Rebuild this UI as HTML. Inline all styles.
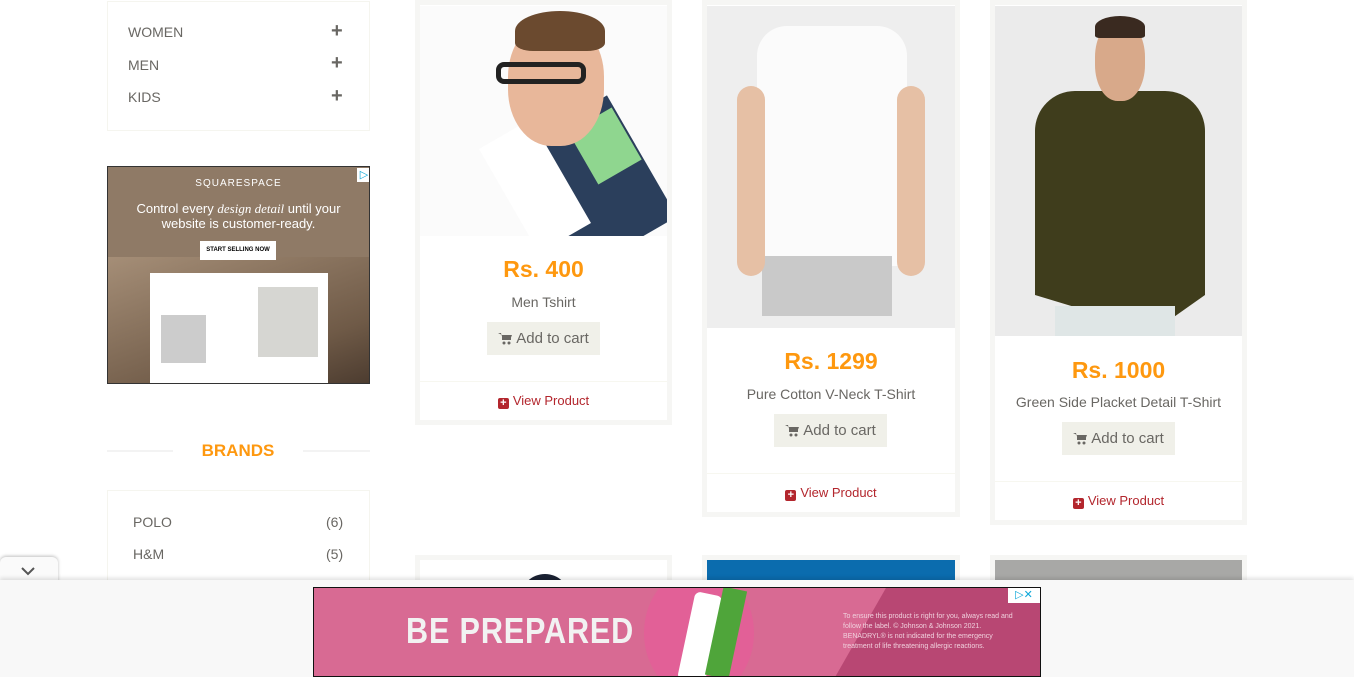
<!DOCTYPE html>
<html><head><style>
*{margin:0;padding:0;box-sizing:border-box}
body{width:1354px;height:677px;overflow:hidden;background:#fff;font-family:"Liberation Sans",Arial,sans-serif;position:relative}
.abs{position:absolute}
.cat{left:107px;top:1px;width:263px;height:130px;border:1px solid #f5f5ef}
.cat div{position:absolute;left:20px;font-size:14px;color:#696763}
.cat span{position:absolute;left:223px;font-weight:900;font-size:20px;line-height:20px;color:#696763}
.card{position:absolute;background:#f6f6f4;padding:5px}
.inner{background:#fff;width:100%;height:100%;position:relative;text-align:center}
.price{color:#fe980f;font-weight:bold;font-size:23px;position:absolute;width:100%}
.name{color:#696763;font-size:14px;position:absolute;width:100%}
.btn{position:absolute;background:#f0f0e9;color:#696763;font-size:15px;width:113px;height:33px;line-height:33px}
.btn svg{vertical-align:-2px;margin-right:4px}
.div{position:absolute;left:0;width:100%;height:1px;background:#f7f7f0}
.vp{position:absolute;width:100%;color:#b3262d;font-size:13px}
.vp b{display:inline-block;width:11px;height:11px;background:#b3262d;border-radius:2px;color:#fff;font-size:11px;line-height:11px;vertical-align:-1px;margin-right:4px}
</style></head><body>
<div class="abs cat">
<div style="top:22px">WOMEN</div><span style="top:19px">+</span>
<div style="top:55px">MEN</div><span style="top:51px">+</span>
<div style="top:87px">KIDS</div><span style="top:84px">+</span>
</div>
<div class="abs" style="left:107px;top:166px;width:263px;height:218px;background:#8f7a66;border:1px solid #333;overflow:hidden">
<div class="abs" style="left:0;top:90px;width:263px;height:130px;background:linear-gradient(160deg,#a58e77,#6f5a47 70%,#4a3a2e)"></div>
<div class="abs" style="top:11px;width:100%;text-align:center;color:#fff;font-size:10px;letter-spacing:1px">SQUARESPACE</div>
<div class="abs" style="top:34px;width:100%;text-align:center;color:#fff;font-size:13px;line-height:15px">Control every <i style="font-family:'Liberation Serif'">design detail</i> until your<br>website is customer-ready.</div>
<div class="abs" style="left:92px;top:74px;width:76px;height:19px;background:#fff;font-size:6px;text-align:center;line-height:19px;font-weight:bold">START SELLING NOW</div>
<div class="abs" style="left:42px;top:106px;width:178px;height:112px;background:#fff"></div>
<div class="abs" style="left:150px;top:120px;width:60px;height:70px;background:#d6d6d2"></div>
<div class="abs" style="left:53px;top:148px;width:45px;height:48px;background:#ccc"></div>
<div class="abs" style="left:249px;top:1px;width:14px;height:14px;background:#fff;color:#0aa6d8;font-size:11px;text-align:center">▷</div>
</div>
<div class="abs" style="left:107px;top:450px;width:66px;height:2px;background:#f3f3f3"></div>
<div class="abs" style="left:303px;top:450px;width:67px;height:2px;background:#f3f3f3"></div>
<div class="abs" style="left:173px;top:441px;width:130px;text-align:center;color:#fe980f;font-weight:bold;font-size:17px">BRANDS</div>
<div class="abs" style="left:107px;top:490px;width:263px;height:100px;border:1px solid #f5f5ef;color:#696763;font-size:14px">
<div class="abs" style="left:25px;top:23px">POLO</div><div class="abs" style="left:218px;top:23px">(6)</div>
<div class="abs" style="left:25px;top:55px">H&amp;M</div><div class="abs" style="left:218px;top:55px">(5)</div>
<div class="abs" style="left:25px;top:87px">MADAME</div><div class="abs" style="left:218px;top:87px">(5)</div>
</div>

<div class="card" style="left:415px;top:0;width:257px;height:425px"><div class="inner">
<div class="abs" style="left:0;top:1px;width:247px;height:230px;background:#fbfbfb;overflow:hidden">
<div class="abs" style="left:110px;top:110px;width:120px;height:140px;background:#2b3f5c;transform:rotate(-30deg)"></div>
<div class="abs" style="left:160px;top:110px;width:50px;height:60px;background:#8fd68f;transform:rotate(-30deg)"></div>
<div class="abs" style="left:85px;top:120px;width:60px;height:120px;background:#fff;transform:rotate(-30deg)"></div>
<div class="abs" style="left:88px;top:14px;width:96px;height:126px;background:#e8b79a;border-radius:45%"></div>
<div class="abs" style="left:95px;top:5px;width:90px;height:40px;background:#6b4a2f;border-radius:50% 50% 20% 20%"></div>
<div class="abs" style="left:76px;top:56px;width:90px;height:22px;border:5px solid #222;border-radius:8px"></div>
</div>
<div class="price" style="top:251px">Rs. 400</div>
<div class="name" style="top:289px">Men Tshirt</div>
<div class="btn" style="left:67px;top:317px"><svg width="14" height="13" viewBox="0 0 14 13"><path d="M0 1h3l2 7h7l2-5H4" fill="#696763"/><rect x="4" y="3" width="9" height="5" fill="#696763"/><circle cx="6" cy="11" r="1.5" fill="#696763"/><circle cx="11" cy="11" r="1.5" fill="#696763"/></svg>Add to cart</div>
<div class="div" style="top:376px"></div>
<div class="vp" style="top:388px"><b>+</b>View Product</div>
</div></div>

<div class="card" style="left:702px;top:0;width:258px;height:517px"><div class="inner">
<div class="abs" style="left:0;top:1px;width:248px;height:322px;background:#eeeeee;overflow:hidden">
<div class="abs" style="left:50px;top:20px;width:150px;height:240px;background:#fbfbfb;border-radius:30px 30px 10px 10px"></div>
<div class="abs" style="left:55px;top:250px;width:130px;height:60px;background:#c9c9c9"></div>
<div class="abs" style="left:30px;top:80px;width:28px;height:190px;background:#e6c0a5;border-radius:14px"></div>
<div class="abs" style="left:190px;top:80px;width:28px;height:190px;background:#e6c0a5;border-radius:14px"></div>
</div>
<div class="price" style="top:343px">Rs. 1299</div>
<div class="name" style="top:381px">Pure Cotton V-Neck T-Shirt</div>
<div class="btn" style="left:67px;top:409px"><svg width="14" height="13" viewBox="0 0 14 13"><path d="M0 1h3l2 7h7l2-5H4" fill="#696763"/><rect x="4" y="3" width="9" height="5" fill="#696763"/><circle cx="6" cy="11" r="1.5" fill="#696763"/><circle cx="11" cy="11" r="1.5" fill="#696763"/></svg>Add to cart</div>
<div class="div" style="top:468px"></div>
<div class="vp" style="top:480px"><b>+</b>View Product</div>
</div></div>

<div class="card" style="left:990px;top:0;width:257px;height:525px"><div class="inner">
<div class="abs" style="left:0;top:1px;width:247px;height:330px;background:#ebebeb;overflow:hidden">
<div class="abs" style="left:40px;top:85px;width:170px;height:240px;background:#3f3d1c;border-radius:40px 40px 0 0;clip-path:polygon(0 0,100% 0,100% 85%,70% 100%,0 85%)"></div>
<div class="abs" style="left:100px;top:15px;width:50px;height:80px;background:#d8a98a;border-radius:45%"></div>
<div class="abs" style="left:100px;top:10px;width:50px;height:22px;background:#3a2a20;border-radius:50% 50% 10% 10%"></div>
<div class="abs" style="left:60px;top:300px;width:120px;height:30px;background:#dfe6e6"></div>
</div>
<div class="price" style="top:352px">Rs. 1000</div>
<div class="name" style="top:389px">Green Side Placket Detail T-Shirt</div>
<div class="btn" style="left:67px;top:417px"><svg width="14" height="13" viewBox="0 0 14 13"><path d="M0 1h3l2 7h7l2-5H4" fill="#696763"/><rect x="4" y="3" width="9" height="5" fill="#696763"/><circle cx="6" cy="11" r="1.5" fill="#696763"/><circle cx="11" cy="11" r="1.5" fill="#696763"/></svg>Add to cart</div>
<div class="div" style="top:476px"></div>
<div class="vp" style="top:488px"><b>+</b>View Product</div>
</div></div>

<div class="card" style="left:415px;top:555px;width:257px;height:40px"><div class="inner"><div class="abs" style="left:100px;top:14px;width:50px;height:30px;background:#1b2233;border-radius:25px 25px 0 0"></div></div></div>
<div class="card" style="left:702px;top:555px;width:258px;height:40px"><div class="inner" style="background:#0b6cae"></div></div>
<div class="card" style="left:990px;top:555px;width:257px;height:40px"><div class="inner" style="background:#a8a8a6"></div></div>

<div class="abs" style="left:0;top:557px;width:58px;height:26px;background:#fafafa;border-radius:6px 6px 0 0;box-shadow:0 -1px 3px rgba(0,0,0,.25)"><svg class="abs" style="left:20px;top:9px" width="16" height="10" viewBox="0 0 16 10"><path d="M2 2l6 6 6-6" stroke="#555" stroke-width="2" fill="none"/></svg></div>
<div class="abs" style="left:0;top:580px;width:1354px;height:97px;background:#f8f8f8;box-shadow:0 -2px 4px rgba(0,0,0,.12)"></div>
<div class="abs" style="left:313px;top:587px;width:728px;height:90px;background:#d86a93;border:1px solid #111;overflow:hidden">
<div class="abs" style="left:520px;top:-1px;width:210px;height:92px;background:#b84773;clip-path:polygon(25% 0,100% 0,100% 100%,0 100%)"></div>
<div class="abs" style="left:330px;top:-20px;width:110px;height:130px;background:#e26097;border-radius:50%"></div>
<div class="abs" style="left:372px;top:5px;width:28px;height:90px;background:#fff;transform:rotate(12deg);border-radius:6px"></div>
<div class="abs" style="left:400px;top:0;width:24px;height:90px;background:#4fa53a;transform:rotate(12deg)"></div>
<div class="abs" style="left:92px;top:22px;color:#f2f2f2;font-size:36px;font-weight:bold;letter-spacing:1px;transform:scaleX(.85);transform-origin:left">BE PREPARED</div>
<div class="abs" style="left:529px;top:24px;width:170px;color:#f0d0dd;font-size:7px;line-height:10px">To ensure this product is right for you, always read and follow the label. © Johnson &amp; Johnson 2021. BENADRYL® is not indicated for the emergency treatment of life threatening allergic reactions.</div>
<div class="abs" style="left:694px;top:0;width:32px;height:15px;background:#fff;color:#0aa6d8;font-size:11px;line-height:15px;text-align:center">▷✕</div>
</div>
</body></html>
